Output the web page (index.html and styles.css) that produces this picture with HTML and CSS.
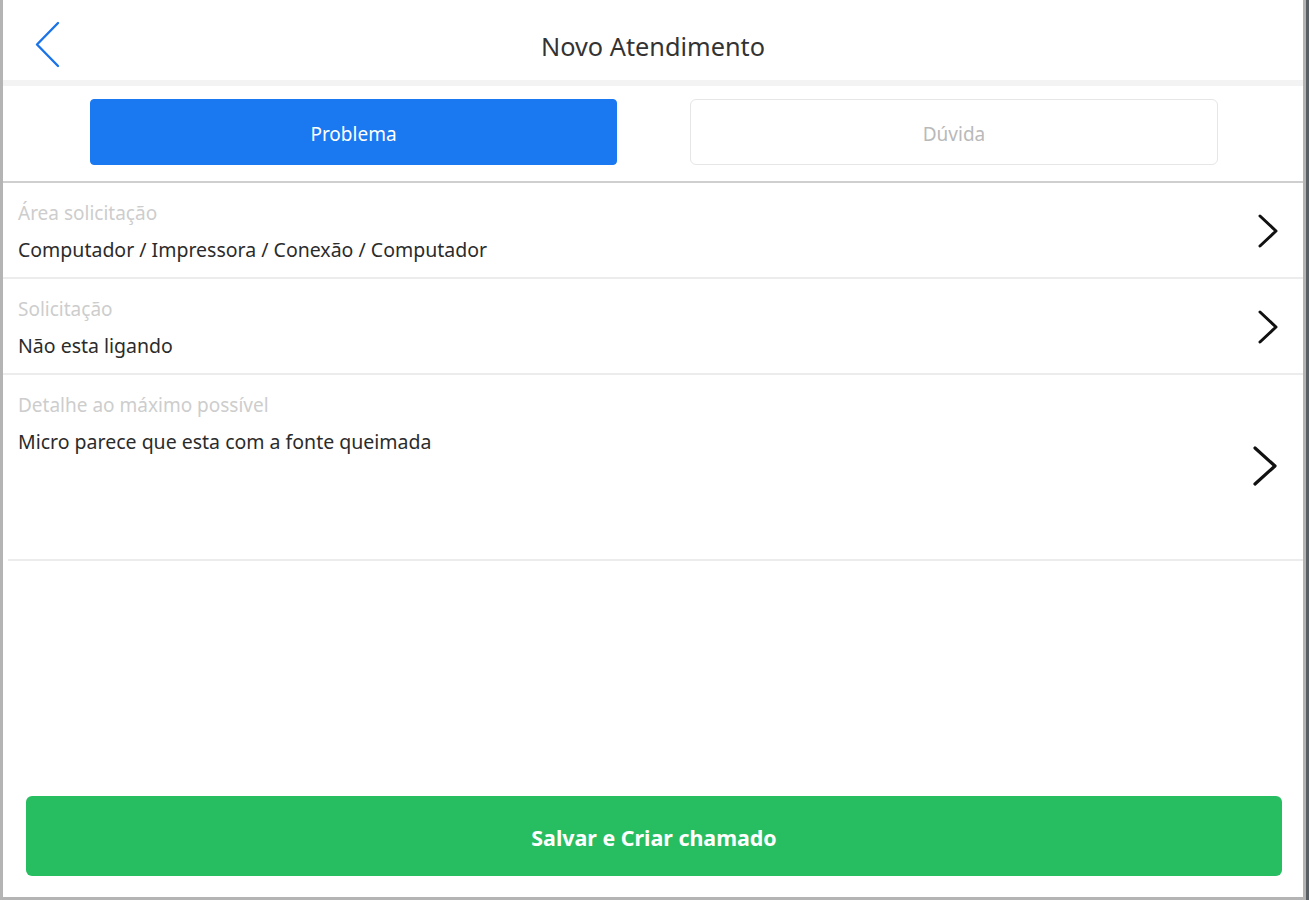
FILE: index.html
```html
<!DOCTYPE html>
<html lang="pt">
<head>
<meta charset="utf-8">
<title>Novo Atendimento</title>
<link rel="stylesheet" href="styles.css">
</head>
<body>
<div class="frame">
  <header class="topbar">
    <button class="back" aria-label="Voltar">
      <svg width="30" height="48" viewBox="0 0 30 48"><path d="M24 2 L3 23.5 L24 45" fill="none" stroke="#1a73e8" stroke-width="2.4" stroke-linecap="round" stroke-linejoin="round"/></svg>
    </button>
    <h1 class="title">Novo Atendimento</h1>
  </header>
  <div class="band"></div>
  <div class="segments">
    <button class="seg seg-active">Problema</button>
    <button class="seg">Dúvida</button>
  </div>
  <ul class="fields">
    <li class="field">
      <div class="field-text">
        <span class="label">Área solicitação</span>
        <span class="value">Computador / Impressora / Conexão / Computador</span>
      </div>
      <svg class="chev" width="22" height="36" viewBox="0 0 22 36"><path d="M3 3 L19 18 L3 33" fill="none" stroke="#111" stroke-width="3" stroke-linecap="round" stroke-linejoin="round"/></svg>
    </li>
    <li class="field">
      <div class="field-text">
        <span class="label">Solicitação</span>
        <span class="value">Não esta ligando</span>
      </div>
      <svg class="chev" width="22" height="36" viewBox="0 0 22 36"><path d="M3 3 L19 18 L3 33" fill="none" stroke="#111" stroke-width="3" stroke-linecap="round" stroke-linejoin="round"/></svg>
    </li>
    <li class="field field-tall">
      <div class="field-text">
        <span class="label">Detalhe ao máximo possível</span>
        <span class="value">Micro parece que esta com a fonte queimada</span>
      </div>
      <svg class="chev chev-big" width="26" height="42" viewBox="0 0 26 42"><path d="M3 3 L23 21 L3 39" fill="none" stroke="#111" stroke-width="3.2" stroke-linecap="round" stroke-linejoin="round"/></svg>
    </li>
  </ul>
  <div class="spacer"></div>
  <div class="footer">
    <button class="save">Salvar e Criar chamado</button>
  </div>
</div>
</body>
</html>
```

FILE: styles.css
```css
* { box-sizing: border-box; }
html, body { margin: 0; padding: 0; }
body {
  width: 1309px;
  height: 900px;
  background: #5a5f63;
  font-family: "Noto Sans", "Open Sans", sans-serif;
  overflow: hidden;
}
.frame {
  width: 1306px;
  height: 900px;
  background: #fff;
  border-left: 3px solid #b4b4b4;
  border-right: 3px solid #b4b4b4;
  border-bottom: 3px solid #b4b4b4;
  display: flex;
  flex-direction: column;
}
.topbar {
  height: 80px;
  display: flex;
  align-items: center;
  justify-content: center;
  position: relative;
}
.back {
  position: absolute;
  left: 31px;
  top: 21px;
  background: none;
  border: 0;
  padding: 0;
  width: 30px;
  height: 48px;
}
.back svg { display: block; }
.title {
  margin: 0;
  font-weight: 400;
  font-size: 25.3px;
  color: #333;
  padding-top: 14px;
  line-height: 1;
}
.band {
  height: 6px;
  background: #f3f3f3;
}
.segments {
  height: 97px;
  display: flex;
  gap: 73px;
  padding: 13px 84px 0 87px;
  border-bottom: 2px solid #cfcfcf;
}
.seg {
  width: 528px;
  height: 66px;
  border: 1px solid #e6e6e6;
  border-radius: 6px;
  background: #fff;
  color: #b9b9b9;
  font-family: inherit;
  font-size: 19px;
  padding: 3px 0 0;
}
.seg-active {
  width: 527px;
  background: #1a78f1;
  border-color: #1a78f1;
  border-radius: 4px;
  color: #fff;
}
.fields {
  list-style: none;
  margin: 0;
  padding: 0;
}
.field {
  display: flex;
  align-items: center;
  justify-content: space-between;
  height: 96px;
  padding: 0 24px 0 15px;
  border-bottom: 2px solid #ececec;
}
.field-tall {
  height: 186px;
  align-items: flex-start;
  margin-left: 5px;
  padding-left: 10px;
  padding-right: 25px;
}
.field-text {
  display: flex;
  flex-direction: column;
  gap: 9px;
  padding-top: 2px;
}
.field-tall .field-text { padding-top: 17px; }
.label {
  font-size: 19px;
  color: #cdcdcd;
  line-height: 27px;
}
.value {
  font-size: 19.5px;
  color: #2b2b2b;
  line-height: 27px;
}
.chev { display: block; margin-top: 2px; }
.chev-big { margin-top: 70px; }
.spacer { flex: 1; }
.footer {
  padding: 0 21px 21px 23px;
}
.save {
  width: 100%;
  height: 80px;
  border: 0;
  border-radius: 6px;
  background: #27bd61;
  color: #fff;
  font-family: inherit;
  font-weight: 700;
  font-size: 21.4px;
  padding: 2px 0 0;
}
```
